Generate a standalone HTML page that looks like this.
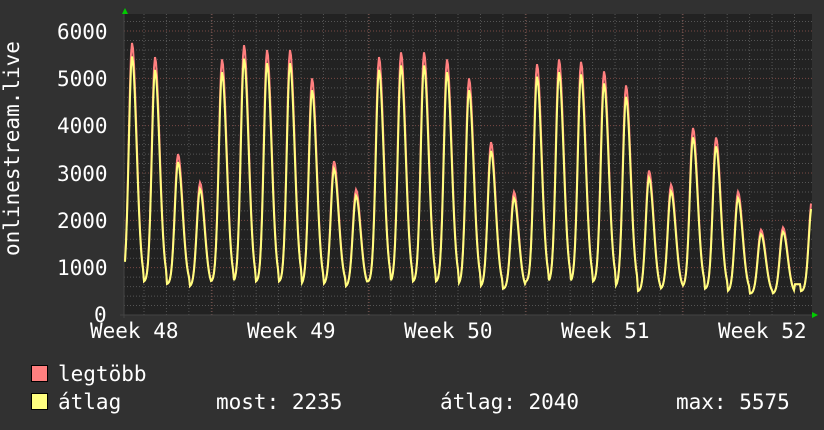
<!DOCTYPE html><html><head><meta charset="utf-8"><style>
body{margin:0;width:824px;height:430px;background:#313131;overflow:hidden;font-family:"DejaVu Sans Mono","Liberation Mono",monospace;color:#fff}
.t{position:absolute;font-size:21px;line-height:20px;white-space:pre}
.sq{position:absolute;width:15px;height:15px;border:1px solid #000}
</style></head><body>
<svg id="g" width="824" height="430" style="position:absolute;left:0;top:0"></svg>
<div class="t" style="left:57px;top:22px">6000</div>
<div class="t" style="left:57px;top:69px">5000</div>
<div class="t" style="left:57px;top:116px">4000</div>
<div class="t" style="left:57px;top:164px">3000</div>
<div class="t" style="left:57px;top:211px">2000</div>
<div class="t" style="left:57px;top:258px">1000</div>
<div class="t" style="left:94px;top:305px">0</div>
<div class="t" style="left:90px;top:321px">Week 48</div>
<div class="t" style="left:247px;top:321px">Week 49</div>
<div class="t" style="left:404px;top:321px">Week 50</div>
<div class="t" style="left:561px;top:321px">Week 51</div>
<div class="t" style="left:718px;top:321px">Week 52</div>
<div class="t" style="left:-78px;top:156px;transform:rotate(-90deg);width:180px;text-align:center">onlinestream.live</div>
<div class="sq" style="left:31px;top:365px;background:#ff7f7f"></div>
<div class="sq" style="left:31px;top:393px;background:#ffff7f"></div>
<div class="t" style="left:58px;top:364px">legtöbb</div>
<div class="t" style="left:58px;top:392px">átlag</div>
<div class="t" style="left:216px;top:392px">most: 2235</div>
<div class="t" style="left:440px;top:392px">átlag: 2040</div>
<div class="t" style="left:676px;top:392px">max: 5575</div>
<script>
var s='',Y0=315,k=0.04733;
s+='<rect x="124" y="14" width="688" height="301" fill="#222"/>';
for(var v=200;v<=6300;v+=200){var y=Y0-v*k;var maj=v%1000==0;s+='<line x1="124" x2="812" y1="'+y+'" y2="'+y+'" stroke="'+(maj?'#7a4a44':'#555')+'" stroke-dasharray="1,2"/>';}
for(var x=144;x<812;x+=22.43){s+='<line y1="14" y2="315" x1="'+x+'" x2="'+x+'" stroke="#555" stroke-dasharray="1,2"/>';}
for(var x=212;x<812;x+=157){s+='<line y1="14" y2="315" x1="'+x+'" x2="'+x+'" stroke="#7a4a44" stroke-dasharray="1,2"/>';}
s+='<line x1="124" x2="124" y1="10" y2="318" stroke="#444"/><line x1="120" x2="814" y1="315" y2="315" stroke="#444"/>';
s+='<polygon points="122,14 128,14 125,8" fill="#0c0"/><polygon points="812,312 812,318 818,315" fill="#0c0"/>';
var P=[[132,5750],[155,5450],[178,3400],[200,2800],[222,5400],[244,5700],[267,5600],[290,5600],[312,5000],[334,3250],[356,2650],[379,5450],[401,5550],[424,5550],[447,5400],[469,5000],[491,3650],[514,2600],[537,5300],[559,5400],[581,5350],[604,5150],[626,4850],[649,3050],[671,2750],[693,3950],[716,3750],[738,2600],[761,1800],[783,1850],[812,2450]];
var M=[700,700,650,600,700,700,700,700,650,650,600,700,700,700,700,650,600,550,700,700,700,700,600,500,550,600,550,500,450,450,500];
function val(x,f){var r=0;for(var i=0;i<P.length;i++){var m=M[i];var d=x-P[i][0];var w=d<0?4.5:6.5;var h=(P[i][1]*f-m)*Math.exp(-d*d/(w*w));if(Math.abs(d)<12&&m+h>r)r=m+h;}if(r==0)r=650;return r;}
function line(f,c){var p='';for(var x=125;x<=811;x+=1){p+=x+','+(Y0-val(x,f)*k).toFixed(1)+' ';}return '<polyline points="'+p+'" fill="none" stroke="'+c+'" stroke-width="2"/>';}
s+=line(1,'#ff7f7f')+line(0.95,'#ffff7f');
document.getElementById('g').innerHTML=s;
</script>
</body></html>
